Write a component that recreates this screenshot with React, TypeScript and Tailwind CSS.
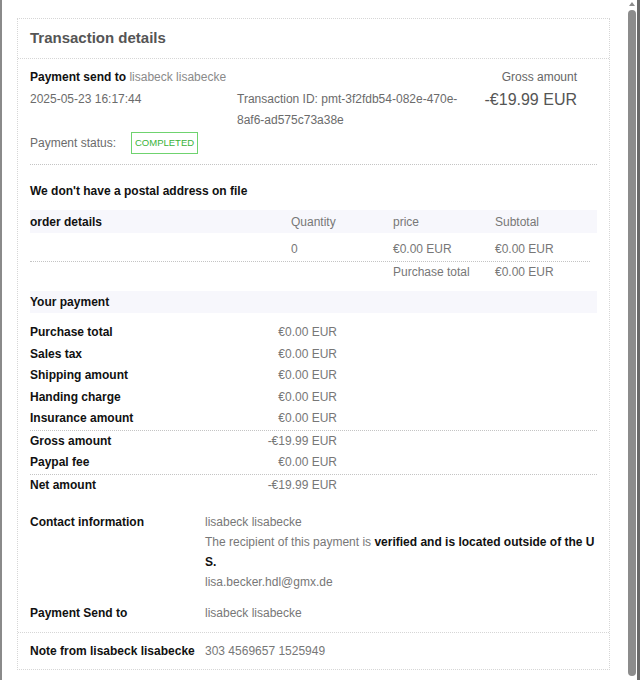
import React from "react";

const payments = [
  { label: "Purchase total", value: "€0.00 EUR" },
  { label: "Sales tax", value: "€0.00 EUR" },
  { label: "Shipping amount", value: "€0.00 EUR" },
  { label: "Handing charge", value: "€0.00 EUR" },
  { label: "Insurance amount", value: "€0.00 EUR", line: true },
  { label: "Gross amount", value: "-€19.99 EUR" },
  { label: "Paypal fee", value: "€0.00 EUR", line: true },
  { label: "Net amount", value: "-€19.99 EUR" },
];

function Dots({ className = "" }: { className?: string }) {
  return <div className={`border-t border-dotted border-[#c4c4c4] ${className}`} />;
}

export default function App() {
  return (
    <div className="flex h-[680px] w-[640px] overflow-hidden bg-white font-['Liberation_Sans',Arial,sans-serif] text-[12px] text-[#111]">
      {/* left frame edge */}
      <div className="w-[2px] bg-[#8a8a8a]" />

      <div className="w-[625px] pl-[15px] pt-[18px]">
        <div className="w-[593px] border border-dotted border-[#d6d6d6]">
          {/* header */}
          <div className="flex h-[40px] items-center border-b border-dotted border-[#d6d6d6] px-[12px]">
            <h1 className="text-[15px] font-bold text-[#555]">Transaction details</h1>
          </div>

          <div className="px-[12px] pt-[7px]">
            {/* summary */}
            <div className="flex justify-between pr-[20px] leading-[22px]">
              <div>
                <span className="font-bold">Payment send to</span>{" "}
                <span className="text-[#8a8a8a]">lisabeck lisabecke</span>
              </div>
              <div className="text-[#666]">Gross amount</div>
            </div>
            <div className="flex leading-[21px] text-[#6b6b6b]">
              <div className="w-[207px] pt-[1px]">2025-05-23 16:17:44</div>
              <div className="w-[240px] pt-[1px]">
                Transaction ID: pmt-3f2fdb54-082e-470e-
                <br />
                8af6-ad575c73a38e
              </div>
              <div className="flex-1 pr-[20px] text-right text-[16px] leading-[23px] text-[#555]">-€19.99 EUR</div>
            </div>
            <div className="mt-[1px] flex h-[22px] items-center">
              <span className="text-[#6b6b6b]">Payment status:</span>
              <span className="ml-[15px] flex h-[22px] w-[67px] items-center justify-center border border-[#6fd36f] text-[9.5px] text-[#39b339]">
                COMPLETED
              </span>
            </div>
            <Dots className="mt-[10px]" />

            {/* order details */}
            <div className="mt-[16px] font-bold leading-[21px]">We don't have a postal address on file</div>
            <div className="mt-[8px] grid h-[23px] grid-cols-[261px_102px_102px_1fr] items-center bg-[#f7f7fc] text-[#777]">
              <div className="font-bold text-[#111]">order details</div>
              <div>Quantity</div>
              <div>price</div>
              <div>Subtotal</div>
            </div>
            <div className="grid grid-cols-[261px_102px_102px_1fr] pt-[6px] leading-[21px] text-[#777]">
              <div />
              <div>0</div>
              <div>€0.00 EUR</div>
              <div>€0.00 EUR</div>
            </div>
            <Dots className="mr-[7px] mt-[1px]" />
            <div className="grid grid-cols-[261px_102px_102px_1fr] leading-[21px] text-[#777]">
              <div />
              <div />
              <div>Purchase total</div>
              <div>€0.00 EUR</div>
            </div>

            {/* your payment */}
            <div className="mt-[8px] flex h-[22px] items-center bg-[#f7f7fc] font-bold">Your payment</div>
            <div className="mt-[9px]">
              {payments.map((p) => (
                <div key={p.label}>
                  <div className="flex leading-[21.5px]">
                    <div className="w-[200px] font-bold">{p.label}</div>
                    <div className="w-[107px] text-right text-[#777]">{p.value}</div>
                  </div>
                  {p.line && <Dots />}
                </div>
              ))}
            </div>

            {/* contact */}
            <div className="mt-[16px] flex leading-[20px]">
              <div className="w-[175px] font-bold">Contact information</div>
              <div className="text-[#777]">
                <div>lisabeck lisabecke</div>
                <div className="whitespace-nowrap">
                  The recipient of this payment is{" "}
                  <span className="font-bold text-[#111]">verified and is located outside of the U</span>
                </div>
                <div className="font-bold text-[#111]">S.</div>
                <div>lisa.becker.hdl@gmx.de</div>
              </div>
            </div>
            <div className="mt-[11px] flex pb-[9px] leading-[20px]">
              <div className="w-[175px] font-bold">Payment Send to</div>
              <div className="text-[#777]">lisabeck lisabecke</div>
            </div>
          </div>

          {/* note */}
          <div className="flex h-[37px] items-center border-t border-dotted border-[#d6d6d6] px-[12px]">
            <div className="w-[175px] font-bold">Note from lisabeck lisabecke</div>
            <div className="text-[#777]">303 4569657 1525949</div>
          </div>
        </div>
      </div>

      {/* scrollbar */}
      <div className="relative w-[10px] bg-white">
        <div className="mx-auto mt-[2px] h-0 w-0 border-x-[3px] border-b-[4px] border-x-transparent border-b-[#8c8c8c]" />
        <div className="mx-auto mt-[4px] h-[666px] w-[8px] rounded-full bg-[#8c8c8c]" />
      </div>
      <div className="w-[3px] bg-[#6a6a6a]" />
    </div>
  );
}
